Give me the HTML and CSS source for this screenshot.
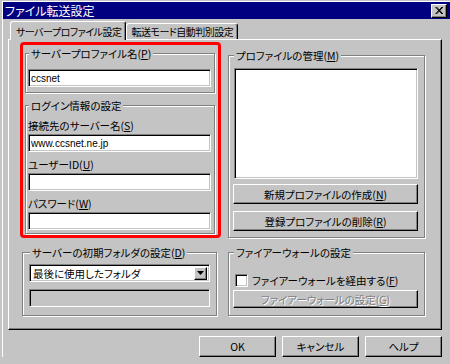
FILE: index.html
```html
<!DOCTYPE html>
<html lang="ja">
<head>
    <meta charset="UTF-8">
    <title>ファイル転送設定</title>
    <link rel="stylesheet" href="styles.css">
</head>
<body>
    <div class="window">
        <div class="titlebar">
            <span class="title">ファイル転送設定</span>
            <button class="close" type="button">
                <svg width="8" height="7" viewBox="0 0 8 7"><path d="M0.5 0L7 7M1.5 0L8 7M7 0L0.5 7M8 0L1.5 7" stroke="#000" stroke-width="1"/></svg>
            </button>
        </div>
        <div class="content">
            <div class="tabs">
                <div class="tab active">サーバープロファイル設定</div>
                <div class="tab">転送モード自動判別設定</div>
            </div>
            <div class="panel">
                <div class="highlight">
                    <div class="group group-name">
                        <div class="legend">サーバープロファイル名(<u>P</u>)</div>
                        <input class="field" type="text" value="ccsnet">
                    </div>
                    <div class="group group-login">
                        <div class="legend">ログイン情報の設定</div>
                        <label class="label">接続先のサーバー名(<u>S</u>)</label>
                        <input class="field" type="text" value="www.ccsnet.ne.jp">
                        <label class="label">ユーザーID(<u>U</u>)</label>
                        <input class="field" type="text" value="">
                        <label class="label">パスワード(<u>W</u>)</label>
                        <input class="field" type="password" value="">
                    </div>
                </div>
                <div class="group group-profile">
                    <div class="legend">プロファイルの管理(<u>M</u>)</div>
                    <div class="listbox"></div>
                    <button class="btn btn-new" type="button">新規プロファイルの作成(<u>N</u>)</button>
                    <button class="btn btn-del" type="button">登録プロファイルの削除(<u>R</u>)</button>
                </div>
                <div class="group group-folder">
                    <div class="legend">サーバーの初期フォルダの設定(<u>D</u>)</div>
                    <div class="combo">
                        <span class="combo-text">最後に使用したフォルダ</span>
                        <span class="combo-arrow"><svg width="7" height="4" viewBox="0 0 7 4"><path d="M0 0H7L3.5 4Z" fill="#000"/></svg></span>
                    </div>
                    <div class="field disabled"></div>
                </div>
                <div class="group group-firewall">
                    <div class="legend">ファイアーウォールの設定</div>
                    <div class="check-row">
                        <span class="checkbox"></span>
                        <span>ファイアーウォールを経由する(<u>F</u>)</span>
                    </div>
                    <button class="btn btn-disabled" type="button">ファイアーウォールの設定(<u>G</u>)</button>
                </div>
            </div>
            <div class="buttons">
                <button class="btn btn-dialog" type="button">OK</button>
                <button class="btn btn-dialog" type="button">キャンセル</button>
                <button class="btn btn-dialog" type="button">ヘルプ</button>
            </div>
        </div>
    </div>
</body>
</html>
```

FILE: styles.css
```css
* {
    box-sizing: border-box;
}
body {
    margin: 0;
    width: 450px;
    height: 364px;
    overflow: hidden;
    background: #c4c4c4;
    font-family: "Noto Sans CJK JP", sans-serif;
    font-size: 10.5px;
    font-feature-settings: "palt";
    color: #000;
}
u {
    text-decoration-thickness: 1px;
    text-underline-offset: 1px;
}
.window {
    margin: 1px 0 0 2px;
    width: 448px;
    border-top: 1px solid #fff;
    border-left: 1px solid #fff;
}
.titlebar {
    display: flex;
    align-items: center;
    justify-content: space-between;
    height: 17px;
    padding: 0 3px 0 2px;
    background: #000080;
}
.title {
    color: #fff;
    font-size: 12px;
    line-height: 17px;
}
.close {
    display: flex;
    align-items: center;
    justify-content: center;
    width: 16px;
    height: 14px;
    padding: 0;
    background: #c4c4c4;
    border: 1px solid;
    border-color: #fff #000 #000 #fff;
    box-shadow: inset -1px -1px #808080;
}
.content {
    padding-left: 5px;
}

/* tabs */
.tabs {
    display: flex;
    align-items: flex-end;
    height: 18px;
    margin-top: 2px;
    padding-left: 2px;
    font-size: 10px;
    letter-spacing: -0.5px;
}
.tab {
    height: 16px;
    padding: 1px 4px 0;
    line-height: 14px;
    white-space: nowrap;
    border: 1px solid;
    border-bottom: 0;
    border-color: #fff #000 #000 #fff;
    border-radius: 3px 3px 0 0;
    box-shadow: inset -1px 0 #808080;
}
.tab.active {
    position: relative;
    z-index: 1;
    height: 19px;
    margin-bottom: -1px;
    padding: 2px 4px 0 5px;
    line-height: 16px;
    background: #c4c4c4;
}
.panel {
    display: grid;
    grid-template-columns: 201px 197px;
    column-gap: 7px;
    row-gap: 14px;
    width: 434px;
    padding: 2px 16px 13px 11px;
    border: 1px solid;
    border-color: #fff #000 #000 #fff;
    box-shadow: inset -1px -1px #808080;
}

/* group boxes */
.highlight {
    padding: 8px 3px 1px 2px;
    border: 3px solid #f00;
    border-radius: 4px;
}
.group {
    display: flex;
    flex-direction: column;
    border: 1px solid #808080;
    box-shadow: 1px 1px #fff, inset 1px 1px #fff;
}
.legend {
    align-self: flex-start;
    margin: -7px 0 0 1px;
    padding: 0 2px;
    line-height: 13px;
    white-space: nowrap;
    background: #c4c4c4;
}
.group-name {
    padding: 0 3px 5px 2px;
}
.group-name .field {
    margin-top: 9px;
}
.group-login {
    margin-top: 12px;
    padding: 0 3px 3px 2px;
}
.label {
    display: block;
    line-height: 13px;
    margin: 6px 0 2px;
}
.group-login .label:first-of-type {
    margin-top: 7px;
}
.field {
    width: 100%;
    height: 18px;
    padding: 0 2px;
    font-family: "Liberation Sans", sans-serif;
    font-size: 10px;
    background: #fff;
    border: 1px solid;
    border-color: #808080 #fff #fff #808080;
    box-shadow: inset 1px 1px #000, inset -1px -1px #c4c4c4;
    outline: none;
}
.field.disabled {
    background: #c4c4c4;
    margin-top: 7px;
}
.group-profile {
    margin-top: 13px;
    padding: 0 6px 5px 4px;
}
.listbox {
    height: 111px;
    margin: 6px 0 0 1px;
    background: #fff;
    border: 1px solid;
    border-color: #808080 #fff #fff #808080;
    box-shadow: inset 1px 1px #000, inset -1px -1px #c4c4c4;
}
.btn {
    padding: 0;
    font-family: inherit;
    font-size: 10.5px;
    font-feature-settings: "palt";
    color: #000;
    text-align: center;
    background: #c4c4c4;
    border: 1px solid;
    border-color: #fff #000 #000 #fff;
    box-shadow: inset -1px -1px #808080;
}
.btn-new {
    height: 20px;
    margin-top: 5px;
}
.btn-del {
    height: 20px;
    margin-top: 7px;
}
.group-folder {
    margin: 0 4px 0 2px;
    padding: 0 6px 8px 6px;
}
.combo {
    display: flex;
    align-items: center;
    height: 18px;
    margin-top: 5px;
    padding: 2px;
    background: #fff;
    border: 1px solid;
    border-color: #808080 #fff #fff #808080;
    box-shadow: inset 1px 1px #000, inset -1px -1px #c4c4c4;
}
.combo-text {
    flex: 1;
    padding-left: 1px;
    line-height: 13px;
}
.combo-arrow {
    display: flex;
    align-items: center;
    justify-content: center;
    width: 13px;
    height: 13px;
    background: #c4c4c4;
    border: 1px solid;
    border-color: #fff #000 #000 #fff;
    box-shadow: inset -1px -1px #808080;
}
.group-firewall {
    padding: 0 6px 7px 4px;
}
.check-row {
    display: flex;
    align-items: center;
    gap: 4px;
    height: 14px;
    margin-top: 14px;
    padding-left: 2px;
    line-height: 13px;
}
.checkbox {
    width: 13px;
    height: 13px;
    background: #fff;
    border: 1px solid;
    border-color: #808080 #fff #fff #808080;
    box-shadow: inset 1px 1px #000, inset -1px -1px #c4c4c4;
}
.btn-disabled {
    height: 18px;
    margin-top: 3px;
    color: #808080;
    text-shadow: 1px 1px #fff;
}
.buttons {
    display: flex;
    justify-content: flex-end;
    gap: 6px;
    width: 434px;
    margin-top: 6px;
}
.btn-dialog {
    width: 77px;
    height: 21px;
}
```
